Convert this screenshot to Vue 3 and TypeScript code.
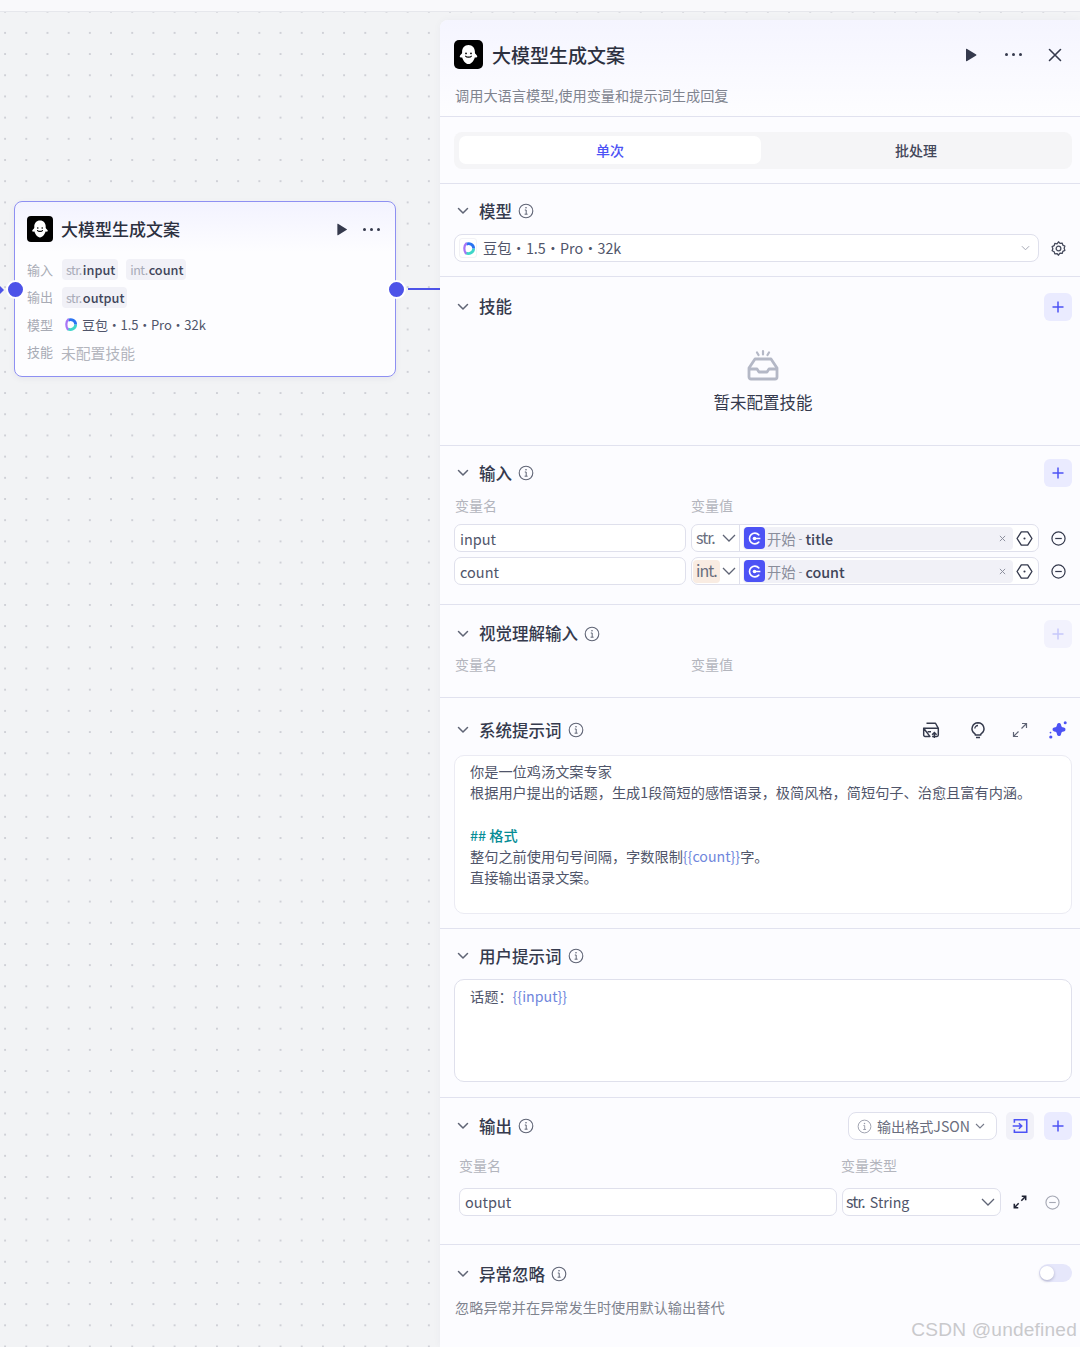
<script setup lang="ts">
const inputRows = [
  { name: 'input', type: 'str.', field: 'title', tinted: false },
  { name: 'count', type: 'int.', field: 'count', tinted: true },
]
const promptLines = ['你是一位鸡汤文案专家', '根据用户提出的话题，生成1段简短的感悟语录，极简风格，简短句子、治愈且富有内涵。']
</script>

<template>
  <div class="canvas">
    <svg class="edge" width="440" height="12" viewBox="0 0 440 12"><path d="M0 3 L4 7 L0 11Z" fill="#4d53e8" /><path d="M408 6H440" stroke="#4d53e8" stroke-width="2" /></svg>

    <article class="node">
      <span class="port port-left"></span>
      <span class="port port-right"></span>
      <header class="node-head">
        <span class="logo logo-small">
          <svg viewBox="0 0 24 24" width="24" height="24"><path d="M12 3.500c-3.600 0-5.700 2.700-5.700 6v1.200c0 .9-2.100 1.800-2.100 3.100 0 .9 1.300.9 2.200.8.800 2.700 3 5.900 5.600 5.900s4.800-3.200 5.600-5.900c.9.100 2.200.1 2.200-.8 0-1.300-2.100-2.200-2.100-3.100V9.500c0-3.300-2.100-6-5.700-6Z" fill="#fff" /><circle cx="9.800" cy="11" r=".8" fill="#000" /><circle cx="14.200" cy="11" r=".8" fill="#000" /><path d="M9.500 13.500c.7 1.200 4.300 1.200 5 0" fill="none" stroke="#000" stroke-width="1.100" stroke-linecap="round" /></svg>
        </span>
        <span class="node-title">大模型生成文案</span>
        <svg class="node-play" viewBox="0 0 12 14" width="12" height="13"><path d="M1 1.200v11.600c0 .4.400.6.700.4l9.500-5.800c.3-.2.300-.6 0-.8L1.700.8C1.400.6 1 .8 1 1.200Z" fill="#353a4d" /></svg>
        <span class="dots node-dots"><i></i><i></i><i></i></span>
      </header>
      <div class="node-row">
        <span class="node-label">输入</span>
        <span class="chip"><em>str.</em>input</span>
        <span class="chip"><em>int.</em>count</span>
      </div>
      <div class="node-row">
        <span class="node-label">输出</span>
        <span class="chip"><em>str.</em>output</span>
      </div>
      <div class="node-row">
        <span class="node-label">模型</span>
        <span class="model-text">
          <svg class="doubao" viewBox="0 0 16 16" width="15" height="15"><path d="M13.500 8C13.500 12 9 14.500 5.200 12.800" fill="none" stroke="#3fd6c9" stroke-width="3" /><path d="M5.500 3.500C9 1.500 13.500 4 13.500 8" fill="none" stroke="#2a73f2" stroke-width="3" /><path d="M5 13C3 10 3 5 5.500 2.800" fill="none" stroke="#a775f5" stroke-width="2.400" stroke-linecap="round" /></svg>
          <span class="spaced">豆包 • 1.5 • Pro • 32k</span>
        </span>
      </div>
      <div class="node-row">
        <span class="node-label">技能</span>
        <span class="no-skill">未配置技能</span>
      </div>
    </article>

    <aside class="panel">
      <section class="panel-top">
        <div class="panel-title-row">
          <span class="logo logo-large">
            <svg viewBox="0 0 24 24" width="27" height="27"><path d="M12 3.500c-3.600 0-5.700 2.700-5.700 6v1.200c0 .9-2.100 1.800-2.100 3.100 0 .9 1.300.9 2.200.8.800 2.700 3 5.900 5.600 5.900s4.800-3.200 5.600-5.900c.9.100 2.200.1 2.200-.8 0-1.300-2.100-2.200-2.100-3.100V9.500c0-3.300-2.100-6-5.700-6Z" fill="#fff" /><circle cx="9.800" cy="11" r=".8" fill="#000" /><circle cx="14.200" cy="11" r=".8" fill="#000" /><path d="M9.500 13.500c.7 1.200 4.300 1.200 5 0" fill="none" stroke="#000" stroke-width="1.100" stroke-linecap="round" /></svg>
          </span>
          <h1>大模型生成文案</h1>
          <svg class="top-play" viewBox="0 0 12 14" width="12" height="14"><path d="M1 1.200v11.600c0 .4.400.6.700.4l9.500-5.800c.3-.2.300-.6 0-.8L1.700.8C1.400.6 1 .8 1 1.200Z" fill="#353a4d" /></svg>
          <span class="dots top-dots"><i></i><i></i><i></i></span>
          <svg class="top-close" viewBox="0 0 14 14" width="14" height="14"><path d="M1.500 1.500l11 11M12.500 1.500l-11 11" stroke="#353a4d" stroke-width="1.600" stroke-linecap="round" /></svg>
        </div>
        <p class="panel-desc">调用大语言模型,使用变量和提示词生成回复</p>
      </section>

      <section class="tabs-section">
        <div class="tabs">
          <span class="tab tab-active">单次</span>
          <span class="tab">批处理</span>
        </div>
      </section>

      <section class="block block-model">
        <div class="head">
          <svg class="chev" viewBox="0 0 12 8" width="12" height="8"><path d="M1.500 1.500 6 6l4.500-4.500" fill="none" stroke="#5f6475" stroke-width="1.500" stroke-linecap="round" stroke-linejoin="round" /></svg>
          <h2>模型</h2>
          <svg class="info" viewBox="0 0 16 16" width="16" height="16"><circle cx="8" cy="8" r="6.800" fill="none" stroke="#5f6475" stroke-width="1.100" /><path d="M6.800 7h1.400v4M6.600 11.200h3" fill="none" stroke="#5f6475" /><circle cx="8" cy="4.800" r=".8" fill="#5f6475" /></svg>
        </div>
        <div class="model-row">
          <div class="model-select">
            <span class="doubao-box">
              <svg viewBox="0 0 16 16" width="15" height="15"><path d="M13.500 8C13.500 12 9 14.500 5.200 12.800" fill="none" stroke="#3fd6c9" stroke-width="3" /><path d="M5.500 3.500C9 1.500 13.500 4 13.500 8" fill="none" stroke="#2a73f2" stroke-width="3" /><path d="M5 13C3 10 3 5 5.500 2.800" fill="none" stroke="#a775f5" stroke-width="2.400" stroke-linecap="round" /></svg>
            </span>
            <span class="select-text">豆包 • 1.5 • Pro • 32k</span>
            <svg class="select-chev" viewBox="0 0 10 6" width="9" height="6"><path d="M1 1l4 4 4-4" fill="none" stroke="#a5a8b4" stroke-width="1.100" /></svg>
          </div>
          <svg class="gear" viewBox="0 0 24 24" width="17" height="17"><path d="M12 2.500l2.100 2.300 3.100-.5.900 3 2.900 1.400-1 3 1 2.900-2.900 1.400-.9 3-3.100-.5L12 21.500l-2.100-2.400-3.100.5-.9-3-2.900-1.400 1-2.900-1-3 2.900-1.400.9-3 3.100.5Z" fill="none" stroke="#454a5c" stroke-width="1.800" stroke-linejoin="round" /><circle cx="12" cy="12" r="3.300" fill="none" stroke="#454a5c" stroke-width="1.800" /></svg>
        </div>
      </section>

      <section class="block block-skill">
        <div class="head">
          <svg class="chev" viewBox="0 0 12 8" width="12" height="8"><path d="M1.500 1.500 6 6l4.500-4.500" fill="none" stroke="#5f6475" stroke-width="1.500" stroke-linecap="round" stroke-linejoin="round" /></svg>
          <h2>技能</h2>
          <span class="grow"></span>
          <span class="add-btn"><svg viewBox="0 0 12 12" width="12" height="12"><path d="M6 .5v11M.5 6h11" stroke="currentColor" stroke-width="1.500" /></svg></span>
        </div>
        <div class="empty">
          <svg viewBox="0 0 34 32" width="34" height="32"><path d="M11 3.500l1.500 2.500M17 2v3.500M23 3.500 21.500 6" stroke="#b4b8c6" stroke-width="2.200" stroke-linecap="round" /><path d="M9 10h16l6 9v9a2 2 0 0 1-2 2H5a2 2 0 0 1-2-2v-9Z" fill="none" stroke="#b4b8c6" stroke-width="2.800" stroke-linejoin="round" /><path d="M3 20h8l2 3h8l2-3h8" fill="none" stroke="#b4b8c6" stroke-width="2.800" stroke-linejoin="round" /></svg>
          <p>暂未配置技能</p>
        </div>
      </section>

      <section class="block block-input">
        <div class="head">
          <svg class="chev" viewBox="0 0 12 8" width="12" height="8"><path d="M1.500 1.500 6 6l4.500-4.500" fill="none" stroke="#5f6475" stroke-width="1.500" stroke-linecap="round" stroke-linejoin="round" /></svg>
          <h2>输入</h2>
          <svg class="info" viewBox="0 0 16 16" width="16" height="16"><circle cx="8" cy="8" r="6.800" fill="none" stroke="#5f6475" stroke-width="1.100" /><path d="M6.800 7h1.400v4M6.600 11.200h3" fill="none" stroke="#5f6475" /><circle cx="8" cy="4.800" r=".8" fill="#5f6475" /></svg>
          <span class="grow"></span>
          <span class="add-btn"><svg viewBox="0 0 12 12" width="12" height="12"><path d="M6 .5v11M.5 6h11" stroke="currentColor" stroke-width="1.500" /></svg></span>
        </div>
        <div class="labels">
          <span class="col-name">变量名</span>
          <span>变量值</span>
        </div>
        <div class="var-row" v-for="row in inputRows" :key="row.name">
          <div class="text-field">{{ row.name }}</div>
          <div class="value-field">
            <span class="type-cell">
              <span class="type-tag" :class="{ tinted: row.tinted }">{{ row.type }}</span>
              <svg viewBox="0 0 14 8" width="14" height="8"><path d="M1 1l6 6 6-6" fill="none" stroke="#5f6475" stroke-width="1.300" /></svg>
            </span>
            <span class="ref">
              <span class="start-icon">
                <svg viewBox="0 0 14 14" width="15" height="15"><path d="M11 3.600A5 5 0 1 0 11 10.400" fill="none" stroke="#fff" stroke-width="1.500" stroke-linecap="round" /><circle cx="7" cy="7" r="1.700" fill="#fff" /><path d="M7 7h5.500" stroke="#fff" stroke-width="1.400" /></svg>
              </span>
              <span class="ref-node">开始</span>
              <span class="ref-sep">-</span>
              <span class="ref-field">{{ row.field }}</span>
              <span class="grow"></span>
              <svg class="ref-x" viewBox="0 0 8 8" width="7" height="7"><path d="M1 1l6 6M7 1 1 7" stroke="#8a8e9c" stroke-width="1.100" /></svg>
            </span>
            <svg class="hex" viewBox="0 0 16 16" width="17" height="17"><path d="M5 1.800h6L15 8l-4 6.200H5L1 8Z" fill="none" stroke="#353a4d" stroke-width="1.300" stroke-linejoin="round" /><circle cx="8" cy="8" r="1" fill="#353a4d" /></svg>
          </div>
          <svg class="minus" viewBox="0 0 16 16" width="15" height="15"><circle cx="8" cy="8" r="7" fill="none" stroke="#353a4d" stroke-width="1.300" /><path d="M4.500 8h7" stroke="#353a4d" stroke-width="1.300" /></svg>
        </div>
      </section>

      <section class="block block-vision">
        <div class="head">
          <svg class="chev" viewBox="0 0 12 8" width="12" height="8"><path d="M1.500 1.500 6 6l4.500-4.500" fill="none" stroke="#5f6475" stroke-width="1.500" stroke-linecap="round" stroke-linejoin="round" /></svg>
          <h2>视觉理解输入</h2>
          <svg class="info" viewBox="0 0 16 16" width="16" height="16"><circle cx="8" cy="8" r="6.800" fill="none" stroke="#5f6475" stroke-width="1.100" /><path d="M6.800 7h1.400v4M6.600 11.200h3" fill="none" stroke="#5f6475" /><circle cx="8" cy="4.800" r=".8" fill="#5f6475" /></svg>
          <span class="grow"></span>
          <span class="add-btn add-faded"><svg viewBox="0 0 12 12" width="12" height="12"><path d="M6 .5v11M.5 6h11" stroke="currentColor" stroke-width="1.500" /></svg></span>
        </div>
        <div class="labels">
          <span class="col-name">变量名</span>
          <span>变量值</span>
        </div>
      </section>

      <section class="block block-system">
        <div class="head">
          <svg class="chev" viewBox="0 0 12 8" width="12" height="8"><path d="M1.500 1.500 6 6l4.500-4.500" fill="none" stroke="#5f6475" stroke-width="1.500" stroke-linecap="round" stroke-linejoin="round" /></svg>
          <h2>系统提示词</h2>
          <svg class="info" viewBox="0 0 16 16" width="16" height="16"><circle cx="8" cy="8" r="6.800" fill="none" stroke="#5f6475" stroke-width="1.100" /><path d="M6.800 7h1.400v4M6.600 11.200h3" fill="none" stroke="#5f6475" /><circle cx="8" cy="4.800" r=".8" fill="#5f6475" /></svg>
          <span class="grow"></span>
          <span class="tools">
            <svg class="tool-box" viewBox="0 0 16 16" width="18" height="18"><path d="M4 2h8l2.500 4.500v6a1.200 1.200 0 0 1-1.200 1.200H9M7 13.700H2.700a1.200 1.200 0 0 1-1.200-1.200v-6Z" fill="none" stroke="#353a4d" stroke-width="1.300" stroke-linejoin="round" /><path d="M1.500 6.500h13M5 9.500h3" stroke="#353a4d" stroke-width="1.300" fill="none" /><path d="M11 15V10.500M9 12.300l2-2 2 2" fill="none" stroke="#353a4d" stroke-width="1.300" /></svg>
            <svg class="tool-bulb" viewBox="0 0 16 16" width="18" height="18"><path d="M8 1.500a5.300 5.300 0 0 0-3.200 9.500c.6.500.9 1 .9 1.500h4.600c0-.5.300-1 .9-1.500A5.300 5.300 0 0 0 8 1.500Z" fill="none" stroke="#353a4d" stroke-width="1.300" /><path d="M6.200 14.700h3.600M8 4c-1.600 0-2.800 1.200-2.800 2.700" stroke="#353a4d" stroke-width="1.200" fill="none" /></svg>
            <svg class="tool-expand" viewBox="0 0 16 16" width="16" height="16"><path d="M9.500 6.500 14.500 1.500M10 1.500h4.500V6M6.500 9.500l-5 5M1.500 10v4.500H6" fill="none" stroke="#5f6475" stroke-width="1.200" /></svg>
            <svg class="tool-star" viewBox="0 0 20 20" width="20" height="20"><path d="M11 5c.6 3.100 1.400 3.900 4.500 4.500-3.100.6-3.900 1.400-4.500 4.500-.6-3.100-1.400-3.900-4.500-4.500C9.600 8.900 10.400 8.100 11 5Z" fill="#4d53f5" stroke="#4d53f5" stroke-width="4" stroke-linejoin="round" /><circle cx="17.200" cy="2.800" r="1.500" fill="#4d53f5" /><circle cx="2.800" cy="17" r="1.600" fill="#4d53f5" /><circle cx="2.500" cy="12.600" r=".9" fill="#4d53f5" /></svg>
          </span>
        </div>
        <div class="editor editor-system">
          <div v-for="line in promptLines" :key="line">{{ line }}</div>
          <div class="blank-line"></div>
          <div class="md-head">## 格式</div>
          <div>整句之前使用句号间隔，字数限制<span class="token">&#123;&#123;count&#125;&#125;</span>字。</div>
          <div>直接输出语录文案。</div>
        </div>
      </section>

      <section class="block block-user">
        <div class="head">
          <svg class="chev" viewBox="0 0 12 8" width="12" height="8"><path d="M1.500 1.500 6 6l4.500-4.500" fill="none" stroke="#5f6475" stroke-width="1.500" stroke-linecap="round" stroke-linejoin="round" /></svg>
          <h2>用户提示词</h2>
          <svg class="info" viewBox="0 0 16 16" width="16" height="16"><circle cx="8" cy="8" r="6.800" fill="none" stroke="#5f6475" stroke-width="1.100" /><path d="M6.800 7h1.400v4M6.600 11.200h3" fill="none" stroke="#5f6475" /><circle cx="8" cy="4.800" r=".8" fill="#5f6475" /></svg>
        </div>
        <div class="editor editor-user">话题：<span class="token">&#123;&#123;input&#125;&#125;</span></div>
      </section>

      <section class="block block-output">
        <div class="head">
          <svg class="chev" viewBox="0 0 12 8" width="12" height="8"><path d="M1.500 1.500 6 6l4.500-4.500" fill="none" stroke="#5f6475" stroke-width="1.500" stroke-linecap="round" stroke-linejoin="round" /></svg>
          <h2>输出</h2>
          <svg class="info" viewBox="0 0 16 16" width="16" height="16"><circle cx="8" cy="8" r="6.800" fill="none" stroke="#5f6475" stroke-width="1.100" /><path d="M6.800 7h1.400v4M6.600 11.200h3" fill="none" stroke="#5f6475" /><circle cx="8" cy="4.800" r=".8" fill="#5f6475" /></svg>
          <span class="grow"></span>
          <span class="format-select">
            <svg viewBox="0 0 16 16" width="15" height="15"><circle cx="8" cy="8" r="6.800" fill="none" stroke="#9a9dab" stroke-width="1" /><path d="M6.800 7h1.400v4M6.600 11.200h3" fill="none" stroke="#9a9dab" /><circle cx="8" cy="4.800" r=".8" fill="#9a9dab" /></svg>
            <span>输出格式JSON</span>
            <svg viewBox="0 0 10 6" width="10" height="6"><path d="M1 1l4 4 4-4" fill="none" stroke="#777b8a" stroke-width="1.100" /></svg>
          </span>
          <span class="import-btn">
            <svg viewBox="0 0 16 16" width="18" height="18"><path d="M3 5V2.500h11v11H3V11" fill="none" stroke="#4d53f5" stroke-width="1.400" /><path d="M1.500 8H9.500M7 5.500 9.500 8 7 10.500" fill="none" stroke="#4d53f5" stroke-width="1.400" /></svg>
          </span>
          <span class="add-btn"><svg viewBox="0 0 12 12" width="12" height="12"><path d="M6 .5v11M.5 6h11" stroke="currentColor" stroke-width="1.500" /></svg></span>
        </div>
        <div class="output-labels">
          <span class="output-name-label">变量名</span>
          <span>变量类型</span>
        </div>
        <div class="output-row">
          <div class="text-field output-name">output</div>
          <div class="type-select">
            <span class="type-short">str.</span><span class="type-name">String</span>
            <span class="grow"></span>
            <svg viewBox="0 0 14 8" width="14" height="8"><path d="M1 1l6 6 6-6" fill="none" stroke="#5f6475" stroke-width="1.300" /></svg>
          </div>
          <svg class="expand" viewBox="0 0 16 16" width="14" height="14"><path d="M9.500 6.500 14.500 1.500M10 1.500h4.500V6M6.500 9.500l-5 5M1.500 10v4.500H6" fill="none" stroke="#1f2233" stroke-width="1.800" /></svg>
          <svg class="minus minus-faded" viewBox="0 0 16 16" width="15" height="15"><circle cx="8" cy="8" r="7" fill="none" stroke="#a5a8b4" stroke-width="1.200" /><path d="M4.500 8h7" stroke="#a5a8b4" stroke-width="1.200" /></svg>
        </div>
      </section>

      <section class="block block-except">
        <div class="head">
          <svg class="chev" viewBox="0 0 12 8" width="12" height="8"><path d="M1.500 1.500 6 6l4.500-4.500" fill="none" stroke="#5f6475" stroke-width="1.500" stroke-linecap="round" stroke-linejoin="round" /></svg>
          <h2>异常忽略</h2>
          <svg class="info" viewBox="0 0 16 16" width="16" height="16"><circle cx="8" cy="8" r="6.800" fill="none" stroke="#5f6475" stroke-width="1.100" /><path d="M6.800 7h1.400v4M6.600 11.200h3" fill="none" stroke="#5f6475" /><circle cx="8" cy="4.800" r=".8" fill="#5f6475" /></svg>
          <span class="grow"></span>
          <span class="toggle"><i></i></span>
        </div>
        <p class="except-desc">忽略异常并在异常发生时使用默认输出替代</p>
      </section>

      <span class="watermark">CSDN @undefined</span>
    </aside>
  </div>
</template>

<style>
html, body { margin: 0; background: #f2f3f5; }
</style>

<style scoped>
* { box-sizing: border-box; }
.canvas {
  position: relative;
  width: 1080px;
  height: 1347px;
  overflow: hidden;
  font-family: "Noto Sans CJK SC", "Noto Sans", sans-serif;
  color: #353a4d;
  background-color: #f2f3f5;
  background-image: radial-gradient(circle, #cfd0d6 0.8px, transparent 1.1px);
  background-size: 21.200px 21.200px;
  background-position: -5.500px 1.100px;
}
.canvas::before {
  content: "";
  position: absolute;
  left: 0; right: 0; top: 0;
  height: 11px;
  background: #f9f9fb;
  border-bottom: 1px solid #e6e7ec;
}
.edge { position: absolute; left: 0; top: 283px; }

.node {
  position: absolute;
  left: 14px; top: 201px;
  width: 382px; height: 176px;
  padding: 0 12px;
  border: 1px solid #8e90f2;
  border-radius: 8px;
  background: linear-gradient(#f3f3ff 0, #fdfdff 50px, #fdfdff 100%);
  box-shadow: 0 2px 6px rgba(30, 35, 70, .05);
}
.port {
  position: absolute;
  top: 78px;
  width: 19px; height: 19px;
  border-radius: 50%;
  background: #4d53e8;
  border: 2.500px solid #fff;
}
.port-left { left: -9px; }
.port-right { right: -11px; }
.node-head { display: flex; align-items: center; height: 54px; }
.logo { display: flex; align-items: center; justify-content: center; background: #000; flex: none; }
.logo-small { width: 26px; height: 26px; border-radius: 4px; }
.logo-large { width: 29px; height: 29px; border-radius: 5px; }
.node-title { margin: 0 0 2px 8px; font-size: 17px; font-weight: 500; color: #2c3040; }
.node-play { margin-left: auto; }
.dots { display: inline-flex; gap: 4px; }
.dots i { width: 3px; height: 3px; border-radius: 50%; background: #353a4d; }
.node-dots { margin-left: 15px; margin-right: 3px; }
.node-row { display: flex; align-items: center; height: 27.500px; font-size: 13px; }
.node-label { width: 35px; margin-bottom: 1px; color: #a8abb5; }
.chip {
  display: inline-flex;
  align-items: baseline;
  height: 21px;
  line-height: 21px;
  padding: 0 3px 0 4px;
  margin-right: 8px;
  border-radius: 4px;
  background: #f1f1f7;
  font-size: 12.700px;
  font-weight: 500;
  color: #40455a;
}
.chip em { font-style: normal; font-weight: 400; color: #a8abb8; letter-spacing: -.5px; margin-right: 1px; font-size: 12.500px; }
.model-text { display: inline-flex; align-items: center; color: #50556a; }
.spaced { word-spacing: -3.200px; }
.doubao { margin: 0 4px 0 1px; }
.no-skill { font-size: 14.800px; color: #b3b5bd; margin: 0 0 -1px -1px; }

.panel {
  position: absolute;
  left: 440px; top: 20px;
  width: 640px; height: 1327px;
  background: #fcfcff;
  border-radius: 8px 0 0 0;
  box-shadow: 0 0 8px rgba(40, 45, 90, .04);
}
section { border-bottom: 1px solid #e1e2ef; }
.panel-top {
  height: 97px;
  padding: 20px 8px 0 14px;
  background: linear-gradient(#f5f5ff, #fdfdff);
  border-radius: 8px 0 0 0;
}
.panel-title-row { display: flex; align-items: center; height: 29px; }
h1 { margin: 0 0 0 9px; font-size: 19px; font-weight: 500; color: #2c3040; line-height: 29px; }
.top-play { margin-left: auto; }
.top-dots { margin-left: 28px; }
.top-close { margin: 0 10px 0 26px; }
.panel-desc { margin: 16px 0 0 1px; font-size: 14.200px; line-height: 20px; color: #80848f; }

.tabs-section { height: 67px; padding: 15px 8px 0 14px; }
.tabs { display: flex; height: 37px; padding: 4px 5px 5px; border-radius: 8px; background: #f5f5f7; }
.tab { flex: 1; display: flex; align-items: center; justify-content: center; font-size: 14px; font-weight: 500; color: #43475a; }
.tab:first-child { flex: 0 0 302px; }
.tab:last-child { padding-left: 4px; }
.tab-active { background: #fff; border-radius: 7px; color: #4d53f5; }

.block { padding: 13px 8px 0 14px; }
.head { display: flex; align-items: center; height: 28px; }
.chev { margin: 0 10px 0 3px; flex: none; }
h2 { margin: 0; font-size: 16.500px; font-weight: 500; color: #353a4d; line-height: 28px; }
.info { margin-left: 6px; flex: none; }
.grow { flex: 1; }
.add-btn {
  display: flex; align-items: center; justify-content: center;
  width: 28px; height: 28px;
  border-radius: 6px;
  background: #eaebff;
  color: #4d53f5;
  flex: none;
}
.add-faded { background: #f2f2fd; color: #c6c8fa; }

.block-model { height: 93px; }
.model-row { display: flex; align-items: center; margin-top: 9px; }
.model-select {
  flex: 1; display: flex; align-items: center;
  height: 28px; padding: 0 0 0 4px;
  border: 1px solid #dfe0ec;
  border-radius: 8px;
  background: #fff;
  margin-right: 11px;
}
.doubao-box { display: flex; align-items: center; justify-content: center; width: 18px; height: 20px; border: 1px solid #f2f2f6; border-radius: 3px; }
.select-text { margin: 0 0 1px 6px; font-size: 14.300px; color: #50556a; word-spacing: -3.200px; }
.select-chev { margin-left: auto; margin-right: 8px; }
.gear { margin-right: 5px; }

.block-skill { height: 169px; padding-top: 16px; }
.block-skill h2 { margin-bottom: 2px; }
.empty { display: flex; flex-direction: column; align-items: center; margin-top: 28px; }
.empty svg { display: block; }
.empty p { margin: 9px 0 0; font-size: 16.500px; font-weight: 400; line-height: 24px; color: #353a4d; }

.block-input { height: 159px; }
.labels { display: flex; height: 20px; margin-top: 8px; font-size: 14px; line-height: 20px; color: #b3b5bd; }
.col-name { width: 236px; margin-left: 1px; }
.var-row { display: flex; align-items: center; height: 28px; margin-top: 5px; }
.labels + .var-row { margin-top: 9px; }
.text-field {
  width: 232px; height: 28px;
  padding-left: 5px;
  border: 1px solid #dfe0ec;
  border-radius: 7px;
  background: #fff;
  font-size: 14.500px;
  line-height: 27px;
  color: #50556a;
}
.value-field {
  display: flex; align-items: center;
  width: 348px; height: 28px;
  margin-left: 5px;
  padding-right: 5px;
  border: 1px solid #dfe0ec;
  border-radius: 7px;
  background: #fff;
}
.type-cell {
  display: flex; align-items: center; justify-content: space-between;
  width: 48px; height: 100%;
  padding: 0 3px 0 1px;
  border-right: 1px solid #dfe0ec;
  flex: none;
}
.type-tag {
  display: block;
  padding: 0 3px;
  height: 23px;
  line-height: 20px;
  border-radius: 4px;
  font-size: 16px;
  letter-spacing: -1px;
  color: #6a6e7e;
}
.tinted { background: #f9ece2; }
.ref {
  flex: 1; display: flex; align-items: center;
  height: 23px; margin-left: 3px;
  padding-right: 7px;
  background: #f1f1f7;
  border-radius: 4px;
  font-size: 14.300px;
}
.start-icon { display: flex; align-items: center; justify-content: center; width: 21px; height: 22px; background: #4d53f5; border-radius: 4px; margin-left: 1px; margin-right: 2px; }
.ref-node { color: #8a8e9c; }
.ref-sep { color: #8a8e9c; margin: 0 3px; font-size: 11px; }
.ref-field { font-weight: 500; color: #40455a; }
.hex { margin-left: 3px; flex: none; }
.minus { margin-left: 12px; flex: none; }

.block-vision { height: 93px; padding-top: 15px; }
.block-vision h2 { margin-bottom: 3px; }
.block-vision .labels { margin-top: 6px; }

.block-system { height: 231px; padding-top: 17.500px; }
.tools { display: flex; align-items: center; margin-right: 4px; }
.tool-bulb { margin-left: 29px; }
.tool-expand { margin-left: 25px; }
.tool-star { margin-left: 20px; }
.editor {
  border: 1px solid #ebebf3;
  border-radius: 10px;
  background: #fff;
  font-size: 14.200px;
  line-height: 21.300px;
  color: #50556a;
}
.editor-system { height: 159px; margin-top: 11.500px; padding: 5px 15px; }
.blank-line { height: 21.300px; }
.md-head { color: #078d96; font-weight: 500; }
.token { color: #6f86dc; }

.block-user { height: 169px; padding-top: 12.500px; }
.editor-user { height: 103px; margin-top: 9.500px; padding: 6px 15px; border-color: #dfe0ec; }

.block-output { height: 147px; padding-top: 14px; }
.format-select {
  display: flex; align-items: center; gap: 5px;
  width: 149px; height: 28px;
  padding: 0 9px 0 8px;
  border: 1px solid #dfe0ec;
  border-radius: 8px;
  background: #fff;
  font-size: 14.100px;
  color: #696d7d;
  white-space: nowrap;
}
.import-btn { display: flex; align-items: center; justify-content: center; width: 28px; height: 28px; margin: 0 10px 0 9px; background: #f1f1f8; border-radius: 5px; }
.output-labels { display: flex; height: 20px; margin-top: 15px; font-size: 14px; line-height: 20px; color: #b3b5bd; }
.output-name-label { width: 382px; margin-left: 5px; }
.output-row { display: flex; align-items: center; margin-top: 13px; padding-left: 5px; }
.output-name { width: 378px; line-height: 25px; }
.type-select {
  display: flex; align-items: center; gap: 5px;
  width: 159px; height: 28px;
  margin-left: 5px;
  padding: 0 5px 0 3px;
  border: 1px solid #dfe0ec;
  border-radius: 7px;
  background: #fff;
  font-size: 15px;
  color: #50556a;
}
.type-short { font-size: 16px; letter-spacing: -1px; margin-top: -2px; }
.type-name { font-size: 14.200px; margin-bottom: 1px; }
.expand { margin-left: 12px; flex: none; }
.minus-faded { margin-left: 18px; }

.block-except { height: 102px; border-bottom: 0; padding-top: 15px; }
.toggle { position: relative; display: block; width: 33px; height: 18px; border-radius: 9px; background: #e6e7fb; margin-top: -2px; }
.toggle i { position: absolute; left: 1px; top: 2px; width: 14px; height: 14px; border-radius: 50%; background: #fff; box-shadow: 0 1px 3px rgba(40, 40, 80, .3); }
.except-desc { margin: 9px 0 0 1px; font-size: 14.200px; line-height: 20px; color: #80848f; }
.watermark {
  position: absolute;
  right: 3px; bottom: 4px;
  font-family: "Liberation Sans", sans-serif;
  font-size: 19.100px;
  line-height: 26px;
  letter-spacing: .2px;
  color: #c9c9cc;
}
</style>
